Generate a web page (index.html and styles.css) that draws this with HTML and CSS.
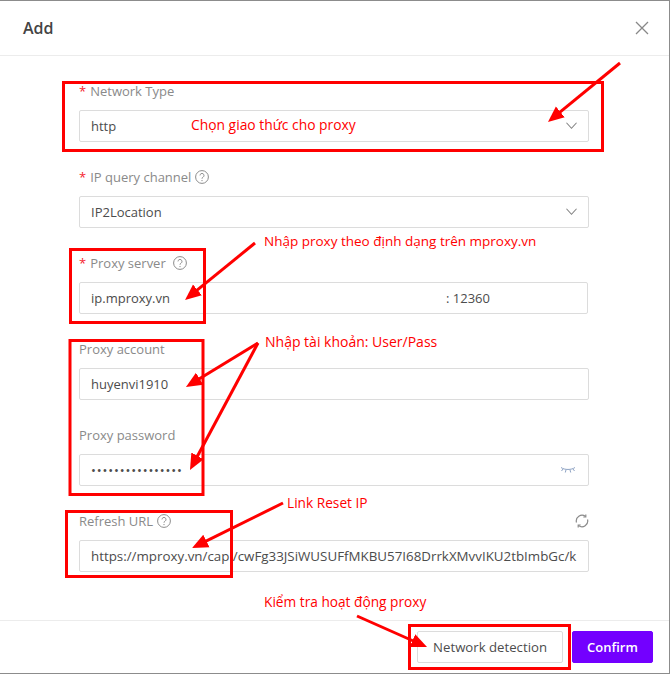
FILE: index.html
```html
<!DOCTYPE html>
<html lang="en">
<head>
<meta charset="utf-8">
<title>Add</title>
<link rel="stylesheet" href="styles.css">
</head>
<body>
<div class="dialog">
  <header class="head">
    <h1 class="title">Add</h1>
    <svg class="close" viewBox="0 0 14 14" width="14" height="14"><path d="M1 1l12 12M13 1L1 13"/></svg>
  </header>
  <main class="form">
    <div class="field">
      <div class="label"><span class="req">*</span>Network Type</div>
      <div class="control">http<svg class="chev" viewBox="0 0 12 7" width="11" height="7"><path d="M.5.5L6 6.500 11.500.5"/></svg></div>
    </div>
    <div class="field">
      <div class="label"><span class="req">*</span>IP query channel<svg class="help" viewBox="0 0 14 14" width="14" height="14"><circle cx="7" cy="7" r="6.400"/><path d="M5 5.400a2 2 0 1 1 3.100 1.700c-.7.400-1.100.800-1.100 1.600"/><circle class="dot" cx="7" cy="10.600" r=".7"/></svg></div>
      <div class="control">IP2Location<svg class="chev" viewBox="0 0 12 7" width="11" height="7"><path d="M.5.5L6 6.500 11.500.5"/></svg></div>
    </div>
    <div class="field">
      <div class="label"><span class="req">*</span>Proxy server<svg class="help help-wide" viewBox="0 0 14 14" width="14" height="14"><circle cx="7" cy="7" r="6.400"/><path d="M5 5.400a2 2 0 1 1 3.100 1.700c-.7.400-1.100.800-1.100 1.600"/><circle class="dot" cx="7" cy="10.600" r=".7"/></svg></div>
      <div class="control control-short"><span class="host">ip.mproxy.vn</span><span>: 12360</span></div>
    </div>
    <div class="field">
      <div class="label">Proxy account</div>
      <div class="control">huyenvi1910</div>
    </div>
    <div class="field">
      <div class="label">Proxy password</div>
      <div class="control"><span class="dots">••••••••••••••••</span><svg class="eye" viewBox="0 0 16 8" width="16" height="8"><path d="M1 1.500c3.500 2.600 10.500 2.600 14 0M3 3L1.500 5M6 3.800L5.300 6.500M10 3.800l.7 2.700M13 3l1.500 2"/></svg></div>
    </div>
    <div class="field">
      <div class="label label-split"><span class="label-main">Refresh URL<svg class="help" viewBox="0 0 14 14" width="14" height="14"><circle cx="7" cy="7" r="6.400"/><path d="M5 5.400a2 2 0 1 1 3.100 1.700c-.7.400-1.100.800-1.100 1.600"/><circle class="dot" cx="7" cy="10.600" r=".7"/></svg></span><svg class="refresh" viewBox="0 0 14 14" width="14" height="14"><path d="M1.500 8.500A5.700 5.700 0 0 1 10.500 2.500M12.500 5.500A5.700 5.700 0 0 1 3.500 11.500"/><path d="M10.800.5v2.500H8.300M3.200 13.500v-2.500h2.500"/></svg></div>
      <div class="control control-clip">https://mproxy.vn/capi/cwFg33JSiWUSUFfMKBU57I68DrrkXMvvIKU2tbImbGc/k</div>
    </div>
  </main>
  <footer class="foot">
    <button class="btn">Network detection</button>
    <button class="btn btn-primary">Confirm</button>
  </footer>

  <svg class="marks" viewBox="0 0 670 674" width="670" height="674">
    <defs>
      <marker id="head" markerUnits="userSpaceOnUse" markerWidth="22" markerHeight="18" refX="6" refY="9" orient="auto">
        <path d="M0 2L16 9 0 16z" fill="#f00"/>
      </marker>
    </defs>
    <rect x="63.500" y="82.500" width="539" height="68"/>
    <rect x="70.500" y="249.500" width="134" height="73"/>
    <rect x="70" y="340.500" width="133" height="154"/>
    <rect x="66.500" y="511.500" width="165" height="65"/>
    <rect x="409.500" y="625.500" width="160" height="43"/>
    <line x1="620" y1="63" x2="555.700" y2="115.700" marker-end="url(#head)"/>
    <line x1="255" y1="243" x2="192.800" y2="293.700" marker-end="url(#head)"/>
    <line x1="258" y1="343" x2="194.500" y2="381.800" marker-end="url(#head)"/>
    <line x1="258" y1="343" x2="194.700" y2="461.200" marker-end="url(#head)"/>
    <line x1="283" y1="503" x2="201" y2="543.600" marker-end="url(#head)"/>
    <line x1="357" y1="616" x2="417.900" y2="643" marker-end="url(#head)"/>
  </svg>
  <span class="note note-a">Chọn giao thức cho proxy</span>
  <span class="note note-b">Nhập proxy theo định dạng trên mproxy.vn</span>
  <span class="note note-c">Nhập tài khoản: User/Pass</span>
  <span class="note note-d">Link Reset IP</span>
  <span class="note note-e">Kiểm tra hoạt động proxy</span>
</div>
</body>
</html>
```
FILE: styles.css
```css
* { box-sizing: border-box; }
html, body { margin: 0; padding: 0; background: #fff; }
body { font-family: "Open Sans", "Noto Sans", sans-serif; font-size: 13px; color: #4c4c4c; }

.dialog {
  position: relative;
  width: 670px;
  height: 674px;
  overflow: hidden;
  display: flex;
  flex-direction: column;
  border-top: 1px solid #8c8c8c;
  border-right: 1px solid #8c8c8c;
  border-bottom: 1px solid #8c8c8c;
}

.head {
  height: 55px;
  flex: none;
  display: flex;
  align-items: center;
  justify-content: space-between;
  padding: 0 20px 0 23px;
  border-bottom: 1px solid #ececec;
}
.title { margin: 0; font-size: 16px; font-weight: 600; color: #444; }
.close path { fill: none; stroke: #888; stroke-width: 1.300; }

.form {
  flex: 1;
  padding: 24px 80px 0 79px;
  display: flex;
  flex-direction: column;
  gap: 24px;
}
.field { display: flex; flex-direction: column; gap: 8px; }
.label {
  height: 22px;
  display: flex;
  align-items: center;
  font-size: 13px;
  color: #8a8a8a;
  line-height: 22px;
}
.label-split { justify-content: space-between; }
.label-main { display: flex; align-items: center; }
.req { color: #f5222d; margin-right: 4px; }
.help { margin-left: 4px; }
.help-wide { margin-left: 7px; }
.help circle, .help path { fill: none; stroke: #8c8c8c; stroke-width: 1; }
.help .dot { fill: #8c8c8c; stroke: none; }

.control {
  position: relative;
  height: 32px;
  padding: 0 11px;
  display: flex;
  align-items: center;
  border: 1px solid #dcdcdc;
  border-radius: 2px;
  font-size: 13px;
  color: #4c4c4c;
  white-space: nowrap;
}
.control-short { margin-right: 1px; }
.control-clip { overflow: hidden; font-size: 13.350px; }
.host { width: 355px; }
.dots { letter-spacing: .85px; }
.chev { position: absolute; right: 11px; top: 11px; }
.chev path { fill: none; stroke: #808080; stroke-width: 1.100; }
.eye { position: absolute; right: 12px; top: 11px; }
.eye path { fill: none; stroke: #8ea3c4; stroke-width: 1; }
.refresh path { fill: none; stroke: #8a8a8a; stroke-width: 1.200; }

.foot {
  flex: none;
  height: 53px;
  padding: 10px 16px 0 0;
  display: flex;
  justify-content: flex-end;
  gap: 9px;
  border-top: 1px solid #ececec;
}
.btn {
  height: 32px;
  padding: 0 15px;
  font: inherit;
  font-size: 13.200px;
  color: #4c4c4c;
  background: #fff;
  border: 1px solid #dcdcdc;
  border-radius: 2px;
}
.btn-primary {
  width: 81px;
  padding: 0;
  color: #fff;
  font-size: 13px;
  font-weight: 600;
  background: #7300ff;
  border-color: #7300ff;
}

.marks { position: absolute; left: 0; top: -1px; pointer-events: none; }
.marks rect { fill: none; stroke: #f00; stroke-width: 3; }
.marks line { stroke: #f00; stroke-width: 3; }

.note {
  position: absolute;
  font-size: 13.700px;
  line-height: 18px;
  color: #f00;
  white-space: nowrap;
}
.note-a { left: 191px; top: 115px; font-size: 13.850px; }
.note-b { left: 264px; top: 231px; font-size: 13.500px; }
.note-c { left: 265px; top: 332px; font-size: 14px; }
.note-d { left: 287px; top: 493px; }
.note-e { left: 264px; top: 592px; }
```
